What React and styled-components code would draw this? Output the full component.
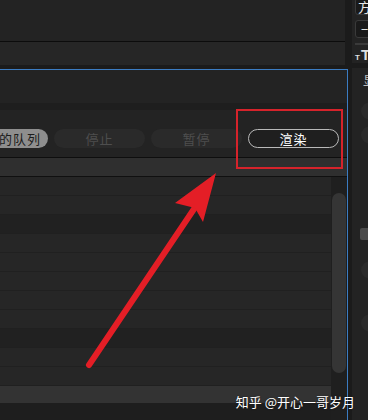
import React from 'react';
import styled, { createGlobalStyle } from 'styled-components';

const Global = createGlobalStyle`
  html, body {
    margin: 0;
    padding: 0;
    background: #1b1b1b;
  }
  * { box-sizing: border-box; }
  body {
    font-family: "Noto Sans CJK SC", "Noto Sans", sans-serif;
  }
`;

const Page = styled.div`
  position: relative;
  display: flex;
  width: 368px;
  height: 420px;
  overflow: hidden;
  background: #1b1b1b;
`;

const MainCol = styled.div`
  display: flex;
  flex-direction: column;
  width: 350px;
  flex-shrink: 0;
`;

const TopPanel = styled.div`
  height: 42px;
  margin-right: 5px;
  background: #232323;
  border-bottom: 1px solid #0c0c0c;
`;

const SubBar = styled.div`
  height: 23px;
  margin-right: 5px;
  background: #262626;
`;

const QueuePanel = styled.div`
  display: flex;
  flex-direction: column;
  flex: 1;
  width: 348px;
  margin-top: 4px;
  background: #232323;
  border-top: 1px solid #3b7cc2;
  border-right: 1px solid #3b7cc2;
`;

const PanelHead = styled.div`
  height: 33px;
  background: #232323;
`;

const Band = styled.div`
  height: 7px;
  background: #1e1e1e;
`;

const Toolbar = styled.div`
  display: flex;
  justify-content: flex-end;
  align-items: flex-start;
  gap: 6px;
  height: 48px;
  padding: 19px 8px 0 0;
  overflow: hidden;
  background: #232323;
  border-bottom: 1px solid #0e0e0e;
`;

const Button = styled.div`
  flex-shrink: 0;
  display: flex;
  align-items: center;
  justify-content: center;
  width: ${p => (p.$wide ? 'auto' : '91px')};
  height: 19px;
  padding: ${p => (p.$wide ? '0 7px 0 30px' : '0')};
  border-radius: 10px;
  font-size: 13px;
  letter-spacing: 1px;
  white-space: nowrap;
  color: ${p => (p.$variant === 'light' ? '#1c1c1c' : p.$variant === 'primary' ? '#ffffff' : '#4e4e4e')};
  background: ${p => (p.$variant === 'light' ? '#8e8e8e' : p.$variant === 'primary' ? '#1f1f1f' : '#2a2a2a')};
  border: ${p => (p.$variant === 'primary' ? '1.5px solid #b9b9b9' : 'none')};
`;

const ColHeader = styled.div`
  height: 19px;
  background: #2f2f2f;
  border-bottom: 1px solid #101010;
`;

const ListArea = styled.div`
  display: flex;
  flex: 1;
`;

const ListBody = styled.div`
  display: flex;
  flex-direction: column;
  flex: 1;
`;

const Row = styled.div`
  height: 19px;
  background: ${p => (p.$dark ? '#212121' : '#262626')};
  border-bottom: 1px solid #202020;
`;

const StatusStrip = styled.div`
  height: 17px;
  background: #333333;
`;

const BottomStrip = styled.div`
  flex: 1;
  background: #1e1e1e;
`;

const Track = styled.div`
  width: 16px;
  padding: 16px 1px 0 1px;
  background: #1f1f1f;
`;

const Thumb = styled.div`
  height: 180px;
  border-radius: 7px;
  background: #353535;
`;

const SideCol = styled.div`
  display: flex;
  flex-direction: column;
  flex: 1;
  padding-left: 2px;
  overflow: hidden;
`;

const SideTop = styled.div`
  display: flex;
  flex-direction: column;
  height: 63px;
  padding-left: 3px;
  background: #232323;
`;

const SideBox = styled.div`
  flex-shrink: 0;
  width: 40px;
  height: ${p => p.$h}px;
  margin-top: ${p => p.$mt}px;
  padding-left: ${p => p.$pl}px;
  border: 1px solid #3a3a3a;
  border-radius: 3px;
  background: #1a1a1a;
  color: #e8e8e8;
  font-size: 13px;
  line-height: ${p => p.$h - 2}px;
  white-space: nowrap;
`;

const Divider = styled.div`
  height: 2px;
  margin-top: 5px;
  background: #3a3a3a;
`;

const SizeIcon = styled.div`
  display: flex;
  align-items: flex-end;
  height: 14px;
  margin-top: 3px;
  color: #e0e0e0;
  font-family: "Liberation Sans", sans-serif;
  font-weight: bold;
  line-height: 1;
  white-space: nowrap;

  small { font-size: 8px; margin-right: 1px; }
  span { font-size: 15px; }
`;

const SideLower = styled.div`
  display: flex;
  flex-direction: column;
  flex: 1;
  margin-top: 5px;
  background: #232323;
`;

const SideLabel = styled.div`
  margin: 4px 0 0 11px;
  color: #bdbdbd;
  font-size: 13px;
  line-height: 16px;
  white-space: nowrap;
`;

const Knob = styled.div`
  flex-shrink: 0;
  width: 20px;
  height: 18px;
  margin: ${p => p.$mt}px 0 0 9px;
  border-radius: 50%;
  background: #2a2a2a;
`;

const Check = styled.div`
  flex-shrink: 0;
  width: 12px;
  height: 12px;
  margin: 84px 0 0 8px;
  border-radius: 2px;
  background: #4a4a4a;
`;

const Annotation = styled.div`
  position: absolute;
  left: 236px;
  top: 109px;
  width: 107px;
  height: 60px;
  border: 2px solid #d6232b;
  pointer-events: none;
`;

const ArrowLayer = styled.svg`
  position: absolute;
  left: 0;
  top: 0;
  pointer-events: none;
`;

const Watermark = styled.div`
  position: absolute;
  right: 13px;
  bottom: 9px;
  color: #ffffff;
  font-size: 13px;
  text-shadow: 0 0 2px rgba(0, 0, 0, 0.4);
  white-space: nowrap;
`;

const rows = [false, false, true, false, false, false, false, false, true, false, false];

function App() {
  return (
    <Page>
      <Global />
      <MainCol>
        <TopPanel />
        <SubBar />
        <QueuePanel>
          <PanelHead />
          <Band />
          <Toolbar>
            <Button $wide $variant="light">清除已完成的队列</Button>
            <Button>停止</Button>
            <Button>暂停</Button>
            <Button $variant="primary">渲染</Button>
          </Toolbar>
          <ColHeader />
          <ListArea>
            <ListBody>
              {rows.map((dark, i) => <Row key={i} $dark={dark} />)}
              <StatusStrip />
              <BottomStrip />
            </ListBody>
            <Track>
              <Thumb />
            </Track>
          </ListArea>
        </QueuePanel>
      </MainCol>
      <SideCol>
        <SideTop>
          <SideBox $h={17} $mt={-2} $pl={2}>方向</SideBox>
          <SideBox $h={18} $mt={5} $pl={5}>−</SideBox>
          <Divider />
          <SizeIcon><small>T</small><span>T</span></SizeIcon>
        </SideTop>
        <SideLower>
          <SideLabel>显示</SideLabel>
          <Knob $mt={14} />
          <Knob $mt={6} />
          <Check />
          <Knob $mt={21} />
          <Knob $mt={35} />
        </SideLower>
      </SideCol>

      <Annotation />
      <ArrowLayer width="368" height="420" viewBox="0 0 368 420">
        <line x1="89" y1="365" x2="196" y2="206" stroke="#e41e26" strokeWidth="6" strokeLinecap="round" />
        <polygon points="216,173 203,222 195,208 175,203" fill="#e41e26" />
      </ArrowLayer>
      <Watermark>知乎 @开心一哥岁月</Watermark>
    </Page>
  );
}

export default App;
